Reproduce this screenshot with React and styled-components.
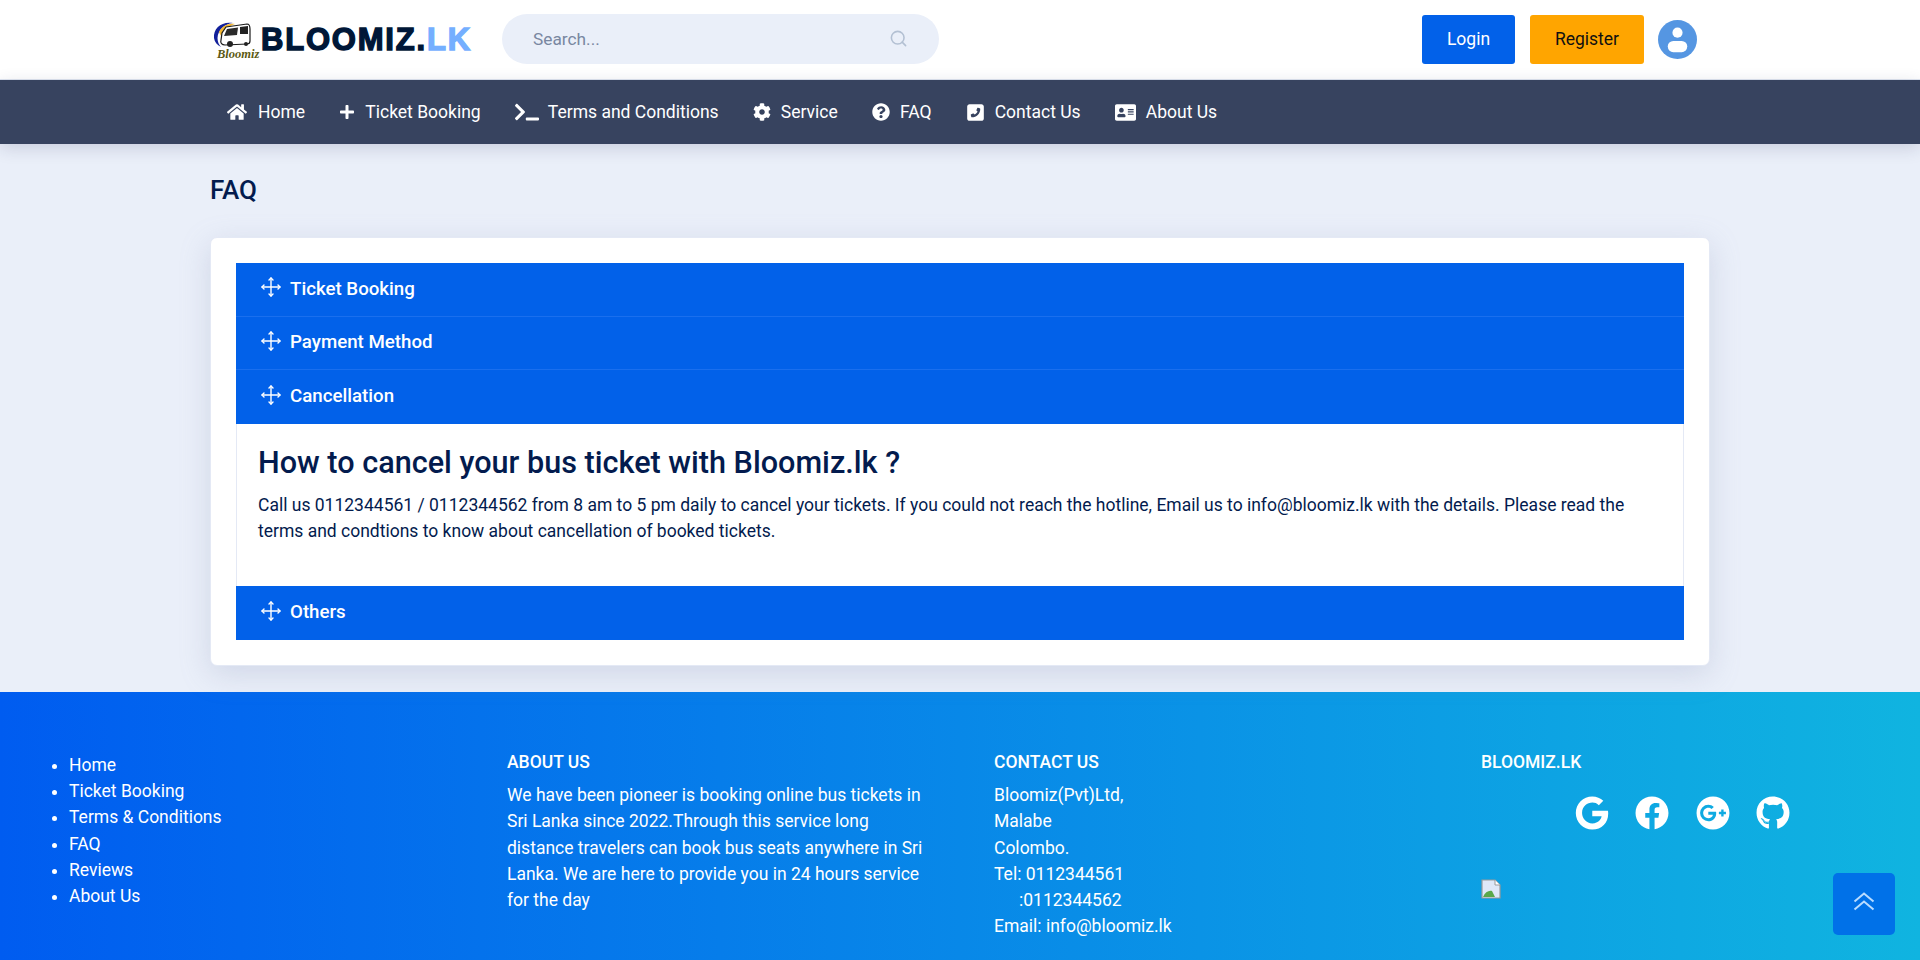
import React from 'react';
import styled, { createGlobalStyle } from 'styled-components';
import {
  FaHome, FaPlus, FaTerminal, FaCog, FaQuestionCircle, FaAddressCard,
  FaFacebook, FaGooglePlus, FaGithub, FaGoogle,
} from 'react-icons/fa';
import { FaSquarePhoneFlip } from 'react-icons/fa6';
import { FiSearch } from 'react-icons/fi';

const GlobalStyle = createGlobalStyle`
  html, body {
    margin: 0;
    padding: 0;
    background: #eaeff9;
    font-family: Roboto, "Liberation Sans", sans-serif;
    overflow: hidden;
  }
  * { box-sizing: border-box; }
`;

const Page = styled.div`
  position: relative;
  width: 1920px;
  height: 960px;
  overflow: hidden;
  display: flex;
  flex-direction: column;
`;

const TopBar = styled.header`
  height: 80px;
  background: #fff;
  border-bottom: 1px solid #dfe5f0;
  padding: 0 210px;
  display: flex;
  align-items: center;
`;

const LogoWrap = styled.div`
  width: 292px;
  display: flex;
  align-items: center;
`;

const LogoMark = styled.svg`
  width: 50px;
  height: 44px;
  flex-shrink: 0;
`;

const LogoText = styled.span`
  font-family: "Liberation Sans", Arial, sans-serif;
  font-weight: 700;
  font-size: 31px;
  letter-spacing: 1.8px;
  color: #001737;
  -webkit-text-stroke: 1.4px #001737;
  margin-left: 1px;
  & em {
    font-style: normal;
    color: #74afff;
    -webkit-text-stroke: 1.4px #74afff;
  }
`;

const SearchBox = styled.div`
  width: 437px;
  height: 50px;
  margin-top: -2px;
  border-radius: 25px;
  background: #eaeff9;
  padding: 0 31px;
  display: flex;
  align-items: center;
  justify-content: space-between;
  font-size: 17.3px;
  color: #7987a1;
  & svg {
    color: #b3c0d3;
    font-size: 19px;
    margin-right: 0;
  }
`;

const TopActions = styled.div`
  margin-left: auto;
  margin-right: 13px;
  display: flex;
  align-items: center;
`;

const TopButton = styled.button`
  height: 49px;
  width: ${p => p.$w}px;
  margin-right: ${p => p.$mr}px;
  border: 0;
  border-radius: 3px;
  padding: 0 0 2px;
  background: ${p => p.$bg};
  color: ${p => p.$fg};
  font-family: inherit;
  font-size: 17.5px;
`;

const Avatar = styled.svg`
  width: 39px;
  height: 39px;
`;

const NavBar = styled.nav`
  height: 64px;
  background: #37435f;
  padding: 0 227px;
  display: flex;
  align-items: center;
  box-shadow: 0 4px 16px rgba(30, 40, 80, 0.16);
  position: relative;
`;

const NavItem = styled.a`
  display: flex;
  align-items: center;
  color: #fff;
  font-size: 17.5px;
  margin-right: 34.2px;
  & svg {
    font-size: ${p => p.$icon || 16}px;
    margin-right: ${p => p.$gap || 10}px;
  }
`;

const Content = styled.main`
  position: relative;
  z-index: 1;
  padding: 0 210px;
  height: 548px;
  flex-shrink: 0;
`;

const PageTitle = styled.h2`
  margin: 0;
  height: 93px;
  padding-top: 31px;
  font-size: 26px;
  line-height: 30px;
  font-weight: 500;
  color: #031b4e;
`;

const Card = styled.section`
  background: #fff;
  border-radius: 7px;
  padding: 25px 25px 26px 25px;
  border: 1px solid #e4e9f5;
  box-shadow: 0 8px 30px rgba(140, 150, 185, 0.28);
  height: 429px;
`;

const AccordionHead = styled.div`
  height: ${p => p.$h || 53.5}px;
  background: #0261e9;
  border-bottom: 1px solid ${p => (p.$line ? '#1a6fee' : '#0261e9')};
  padding: 0 0 1px 25px;
  display: flex;
  align-items: center;
  color: #fff;
  font-size: 18.7px;
  font-weight: 500;
  & svg {
    width: 20px;
    height: 20px;
    margin-right: 9px;
    margin-top: -3px;
  }
`;

const Panel = styled.div`
  height: 162px;
  padding: 21px 21px;
  border: 1px solid #e4e9f5;
  border-top: 0;
  border-bottom: 0;
  color: #031b4e;
`;

const PanelTitle = styled.h3`
  margin: 0 0 11px;
  font-size: 30.6px;
  line-height: 36px;
  font-weight: 500;
`;

const PanelText = styled.p`
  margin: 0;
  font-size: 17.5px;
  line-height: 26px;
`;

const Footer = styled.footer`
  flex: 1;
  background: linear-gradient(to right, #005cf0, #10b4e0);
  color: #fff;
  position: relative;
  display: grid;
  grid-template-columns: 507px 487px 487px 1fr;
  padding-top: 60px;
  font-size: 17.5px;
`;

const LinkList = styled.ul`
  margin: 0;
  padding: 0 0 0 69px;
  line-height: 26.2px;
`;

const FooterCol = styled.div`
  line-height: 26.3px;
`;

const FooterHead = styled.h4`
  margin: 0 0 10px;
  font-size: 17.5px;
  line-height: 20px;
  font-weight: 500;
`;

const AboutText = styled.div`
  width: 420px;
`;

const Indent = styled.span`
  padding-left: 25px;
`;

const SocialRow = styled.div`
  display: flex;
  gap: 26.3px;
  margin: 24px 0 0 94px;
  font-size: 34px;
  line-height: 0;
`;

const BrokenImage = styled.svg`
  display: block;
  width: 20px;
  height: 20px;
  margin-top: 49px;
`;

const ScrollTop = styled.div`
  position: absolute;
  left: 1833px;
  top: 181px;
  width: 62px;
  height: 62px;
  border-radius: 5px;
  background: #0071e8;
  display: flex;
  align-items: center;
  justify-content: center;
`;

const ChevronUps = styled.svg`
  width: 22px;
  height: 20px;
  margin-bottom: 4px;
`;

// thin four-way arrows, the accordion heads use them
const MoveIcon = () => (
  <svg viewBox="0 0 20 20" fill="none" stroke="#fff" strokeWidth="1.4" strokeLinecap="round" strokeLinejoin="round">
    <path d="M10 1v18M1 10h18" />
    <path d="M8 3l2-2 2 2M8 17l2 2 2-2M3 8l-2 2 2 2M17 8l2 2-2 2" />
  </svg>
);

const navLinks = [
  { label: 'Home', icon: <FaHome />, size: 20, gap: 11 },
  { label: 'Ticket Booking', icon: <FaPlus />, size: 16, gap: 10 },
  { label: 'Terms and Conditions', icon: <FaTerminal />, size: 24, gap: 9 },
  { label: 'Service', icon: <FaCog />, size: 18, gap: 10 },
  { label: 'FAQ', icon: <FaQuestionCircle />, size: 18, gap: 10 },
  { label: 'Contact Us', icon: <FaSquarePhoneFlip />, size: 19, gap: 10 },
  { label: 'About Us', icon: <FaAddressCard />, size: 21, gap: 10 },
];

const footerLinks = ['Home', 'Ticket Booking', 'Terms & Conditions', 'FAQ', 'Reviews', 'About Us'];

export default function App() {
  return (
    <Page>
      <GlobalStyle />
      <TopBar>
        <LogoWrap>
          <LogoMark viewBox="0 0 50 44">
            <path d="M4 20C3 10 12 3 23 5C14 6 8 12 7.5 20C7.5 24 9 27 11 29C7 27 4.5 24 4 20Z" fill="#12209a" />
            <path d="M9 14C12 8 18 5 25 6C19 8 14 12 11 18Z" fill="#f2b632" />
            <path d="M16 9L37 6C39 6 40 8 40 11L40 23C40 25 39 26 37 26L15 27C12 27 10 25 11 22L12 15Z" fill="#fff" stroke="#1a1a1a" strokeWidth="1.2" />
            <path d="M17 11L28 9.5L27 17L14 18Z" fill="#2a2a2a" />
            <path d="M30 9L38 8L38 16L30 16Z" fill="#222" />
            <circle cx="20" cy="26" r="3" fill="#222" />
            <circle cx="36" cy="26" r="2" fill="#222" />
            <text x="7" y="40" fontFamily='"Liberation Serif", serif' fontStyle="italic" fontWeight="700" fontSize="12.5" fill="#5c5a14">Bloomiz</text>
          </LogoMark>
          <LogoText>BLOOMIZ.<em>LK</em></LogoText>
        </LogoWrap>
        <SearchBox>
          <span>Search...</span>
          <FiSearch />
        </SearchBox>
        <TopActions>
          <TopButton $w={93} $mr={15} $bg="#0261e9" $fg="#fff">Login</TopButton>
          <TopButton $w={114} $mr={14} $bg="#ffa500" $fg="#111">Register</TopButton>
          <Avatar viewBox="0 0 40 40">
            <circle cx="20" cy="20" r="20" fill="#5596e2" />
            <circle cx="20" cy="13" r="5.2" fill="#fff" />
            <rect x="10" y="21.5" width="20" height="11.5" rx="5.7" fill="#fff" />
          </Avatar>
        </TopActions>
      </TopBar>

      <NavBar>
        {navLinks.map(l => (
          <NavItem key={l.label} $icon={l.size} $gap={l.gap}>
            {l.icon}
            {l.label}
          </NavItem>
        ))}
      </NavBar>

      <Content>
        <PageTitle>FAQ</PageTitle>
        <Card>
          <AccordionHead $line><MoveIcon />Ticket Booking</AccordionHead>
          <AccordionHead $line><MoveIcon />Payment Method</AccordionHead>
          <AccordionHead $h={54}><MoveIcon />Cancellation</AccordionHead>
          <Panel>
            <PanelTitle>How to cancel your bus ticket with Bloomiz.lk ?</PanelTitle>
            <PanelText>
              Call us 0112344561 / 0112344562 from 8 am to 5 pm daily to cancel your tickets. If you could not reach the hotline, Email us to info@bloomiz.lk with the details. Please read the terms and condtions to know about cancellation of booked tickets.
            </PanelText>
          </Panel>
          <AccordionHead $h={54}><MoveIcon />Others</AccordionHead>
        </Card>
      </Content>

      <Footer>
        <LinkList>
          {footerLinks.map(l => <li key={l}>{l}</li>)}
        </LinkList>
        <FooterCol>
          <FooterHead>ABOUT US</FooterHead>
          <AboutText>
            We have been pioneer is booking online bus tickets in Sri Lanka since 2022.Through this service long distance travelers can book bus seats anywhere in Sri Lanka. We are here to provide you in 24 hours service for the day
          </AboutText>
        </FooterCol>
        <FooterCol>
          <FooterHead>CONTACT US</FooterHead>
          Bloomiz(Pvt)Ltd,<br />
          Malabe<br />
          Colombo.<br />
          Tel: 0112344561<br />
          <Indent>:0112344562</Indent><br />
          Email: info@bloomiz.lk
        </FooterCol>
        <FooterCol>
          <FooterHead>BLOOMIZ.LK</FooterHead>
          <SocialRow>
            <FaGoogle />
            <FaFacebook />
            <FaGooglePlus />
            <FaGithub />
          </SocialRow>
          <BrokenImage viewBox="0 0 20 20">
            <path d="M1 1h13l5 5v13H1z" fill="#dfe8f8" stroke="#9a9a9a" strokeWidth="1.2" />
            <path d="M2 18c2-5 6-7 9-6l3 6z" fill="#5aa84a" />
            <path d="M14 1v5h5" fill="#fff" stroke="#9a9a9a" />
          </BrokenImage>
        </FooterCol>
        <ScrollTop>
          <ChevronUps viewBox="0 0 22 20" fill="none" stroke="#b9dcff" strokeWidth="2">
            <path d="M1.5 9.5L11 1.5l9.5 8M1.5 17.5L11 9.5l9.5 8" />
          </ChevronUps>
        </ScrollTop>
      </Footer>
    </Page>
  );
}
